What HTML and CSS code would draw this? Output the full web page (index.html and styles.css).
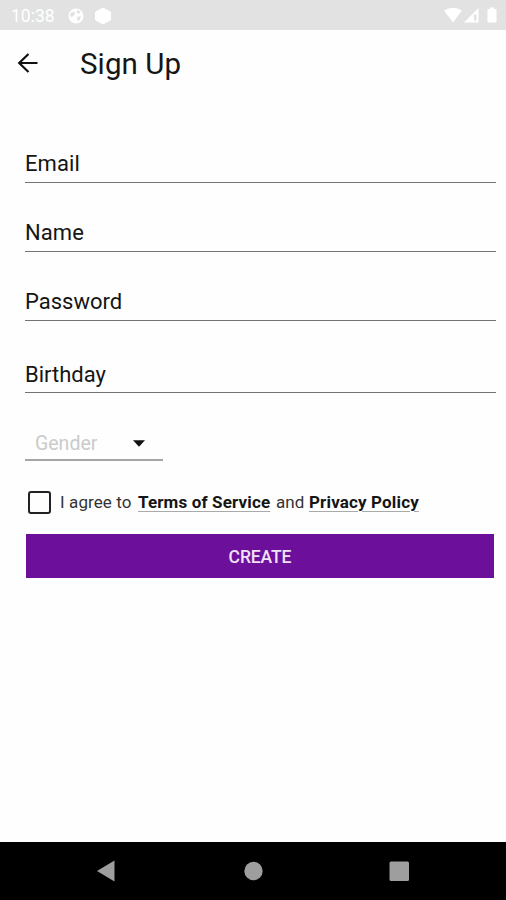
FILE: index.html
```html
<!DOCTYPE html>
<html lang="en">
<head>
<meta charset="utf-8">
<title>Sign Up</title>
<link rel="stylesheet" href="styles.css">
</head>
<body>
<div class="status">
  <span class="clock">10:38</span>
  <svg class="globe" width="16" height="16" viewBox="0 0 16 16"><circle cx="8" cy="8" r="7.5" fill="#fff"/><path d="M2.5 5 6 3.500 7 6 4 9 2 8ZM9 2l3.500 1.500L11 6 9 5ZM9 9l4-1-1 4-2.500 1Z" fill="#e2e2e2"/></svg>
  <svg class="hexagon" width="18" height="18" viewBox="0 0 18 18"><path d="M9 1 16.500 5v8L9 17 1.500 13V5Z" fill="#fff" stroke="#fff" stroke-linejoin="round"/></svg>
  <svg class="signals" width="56" height="18" viewBox="0 0 56 18"><g fill="#fff"><path d="M0 3.500Q9 -2 18 3.500L9 15.500Z"/><path fill-rule="evenodd" d="M20 15.500 34.500 1v14.500ZM30 7.500v6h2.500v-6Z"/><path d="M43.500 2h2.500v-1.500h4v1.500h2.500v13.500h-9Z"/></g></svg>
</div>
<header class="bar">
  <svg width="22" height="22" viewBox="0 0 22 22"><path d="M20.500 11H2M11.500 2 2.200 11l9.300 9" fill="none" stroke="#111" stroke-width="2.2"/></svg>
  <h1>Sign Up</h1>
</header>
<main class="form">
  <div class="field email"><span>Email</span></div>
  <div class="field name"><span>Name</span></div>
  <div class="field password"><span>Password</span></div>
  <div class="field birthday"><span>Birthday</span></div>
  <div class="gender"><span>Gender</span><svg width="12" height="7" viewBox="0 0 12 7"><path d="M0 .3h12L6 6.700Z" fill="#111"/></svg></div>
  <div class="agree"><i class="box"></i><span class="plain first">I agree to</span><a class="terms">Terms of Service</a><span class="plain and">and</span><a class="privacy">Privacy Policy</a></div>
  <button class="create">CREATE</button>
</main>
<nav class="nav">
  <svg width="506" height="58" viewBox="0 0 506 58"><g fill="#9e9e9e"><path d="M97 29 114.500 18.500v21Z"/><circle cx="253.500" cy="29" r="9.200"/><rect x="389.500" y="19.500" width="19.500" height="19.500" rx="1.500"/></g></svg>
</nav>
</body>
</html>
```

FILE: styles.css
```css
* { box-sizing: border-box; }
body {
  margin: 0;
  height: 900px;
  display: flex;
  flex-direction: column;
  overflow: hidden;
  background: #fefefe;
  color: #151515;
  font-family: Roboto, sans-serif;
}
.status {
  height: 30px;
  background: #e2e2e2;
  display: flex;
  align-items: center;
  padding: 2px 9px 0 11px;
}
.clock { width: 57px; color: #fff; font-size: 17.5px; }
.hexagon { margin-left: 10px; }
.signals { margin-left: auto; margin-right: -3px; }
.bar {
  height: 68px;
  display: flex;
  align-items: center;
  padding-left: 17px;
}
.bar svg { margin-bottom: 3px; }
.bar h1 {
  margin: 0 0 0 41px;
  font-size: 29.5px;
  line-height: 34px;
  font-weight: 400;
  letter-spacing: 0.1px;
}
.form {
  flex: 1;
  padding: 16px 10px 0 25px;
}
.field {
  height: 69px;
  display: flex;
  align-items: flex-end;
  padding-bottom: 5px;
  border-bottom: 1px solid #747474;
  font-size: 22px;
  line-height: 26px;
}
.email { letter-spacing: 0.1px; }
.name { letter-spacing: 0.1px; }
.birthday { height: 72px; padding-bottom: 4px; }
.gender {
  width: 138px;
  height: 68px;
  display: flex;
  justify-content: space-between;
  align-items: flex-end;
  padding: 0 18px 4px 10px;
  border-bottom: 2px solid #a5a5a5;
  color: #cbcbcb;
  font-size: 19.5px;
  line-height: 22px;
}
.gender svg { margin-bottom: 8px; }
.agree {
  height: 28px;
  margin-top: 27px;
  display: flex;
  align-items: center;
  font-size: 17px;
  line-height: 22px;
  white-space: nowrap;
}
.box {
  width: 23px;
  height: 23px;
  margin: 0 9px 0 3px;
  border: 2px solid #222;
  border-radius: 3px;
}
.plain { color: #333; letter-spacing: 0.1px; }
.first { width: 78px; }
.terms { width: 133px; }
.and { width: 28px; margin: 0 5px; }
.terms, .privacy {
  font-weight: 700;
  letter-spacing: 0.15px;
  text-decoration: underline #aaa 1px;
  text-underline-offset: 3px;
}
.create {
  display: block;
  width: 468px;
  height: 44px;
  margin: 18px 0 0 1px;
  padding: 1px 0 0;
  border: 0;
  background: #6c109c;
  color: #f0e2f7;
  font: 500 17.5px Roboto, sans-serif;
  letter-spacing: -0.1px;
}
.nav { height: 58px; background: #000; }
.nav svg { display: block; }
```
